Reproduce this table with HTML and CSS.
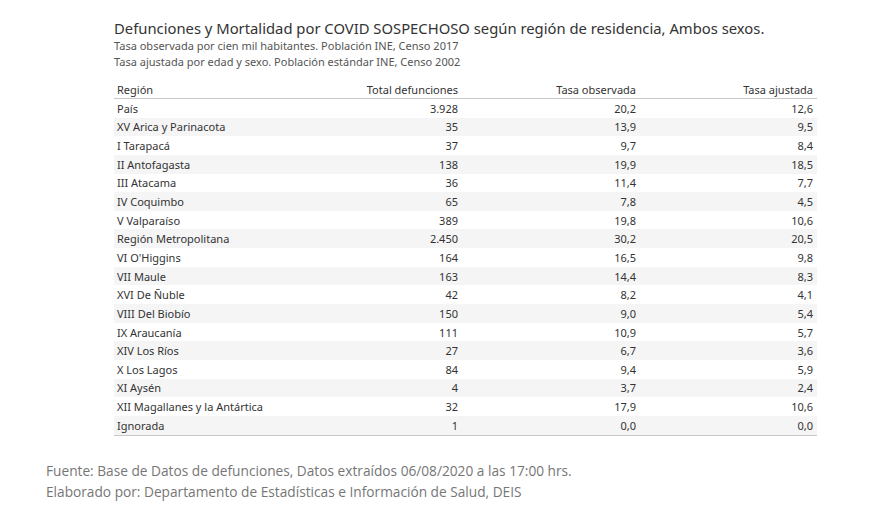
FILE: index.html
```html
<!DOCTYPE html>
<html lang="es">
<head>
<meta charset="utf-8">
<link rel="stylesheet" href="styles.css">
</head>
<body>
<div class="page">
  <div class="head">
    <h1 class="title">Defunciones y Mortalidad por COVID SOSPECHOSO según región de residencia, Ambos sexos.</h1>
    <p class="sub">Tasa observada por cien mil habitantes. Población INE, Censo 2017</p>
    <p class="sub">Tasa ajustada por edad y sexo. Población estándar INE, Censo 2002</p>
  </div>
  <div class="table">
    <div class="row hdr"><span>Región</span><span class="num">Total defunciones</span><span class="num">Tasa observada</span><span class="num">Tasa ajustada</span></div>
    <div class="row"><span>País</span><span class="num">3.928</span><span class="num">20,2</span><span class="num">12,6</span></div>
    <div class="row"><span>XV Arica y Parinacota</span><span class="num">35</span><span class="num">13,9</span><span class="num">9,5</span></div>
    <div class="row"><span>I Tarapacá</span><span class="num">37</span><span class="num">9,7</span><span class="num">8,4</span></div>
    <div class="row"><span>II Antofagasta</span><span class="num">138</span><span class="num">19,9</span><span class="num">18,5</span></div>
    <div class="row"><span>III Atacama</span><span class="num">36</span><span class="num">11,4</span><span class="num">7,7</span></div>
    <div class="row"><span>IV Coquimbo</span><span class="num">65</span><span class="num">7,8</span><span class="num">4,5</span></div>
    <div class="row"><span>V Valparaíso</span><span class="num">389</span><span class="num">19,8</span><span class="num">10,6</span></div>
    <div class="row"><span>Región Metropolitana</span><span class="num">2.450</span><span class="num">30,2</span><span class="num">20,5</span></div>
    <div class="row"><span>VI O'Higgins</span><span class="num">164</span><span class="num">16,5</span><span class="num">9,8</span></div>
    <div class="row"><span>VII Maule</span><span class="num">163</span><span class="num">14,4</span><span class="num">8,3</span></div>
    <div class="row"><span>XVI De Ñuble</span><span class="num">42</span><span class="num">8,2</span><span class="num">4,1</span></div>
    <div class="row"><span>VIII Del Biobío</span><span class="num">150</span><span class="num">9,0</span><span class="num">5,4</span></div>
    <div class="row"><span>IX Araucanía</span><span class="num">111</span><span class="num">10,9</span><span class="num">5,7</span></div>
    <div class="row"><span>XIV Los Ríos</span><span class="num">27</span><span class="num">6,7</span><span class="num">3,6</span></div>
    <div class="row"><span>X Los Lagos</span><span class="num">84</span><span class="num">9,4</span><span class="num">5,9</span></div>
    <div class="row"><span>XI Aysén</span><span class="num">4</span><span class="num">3,7</span><span class="num">2,4</span></div>
    <div class="row"><span>XII Magallanes y la Antártica</span><span class="num">32</span><span class="num">17,9</span><span class="num">10,6</span></div>
    <div class="row last"><span>Ignorada</span><span class="num">1</span><span class="num">0,0</span><span class="num">0,0</span></div>
  </div>
  <div class="foot">
    <p>Fuente: Base de Datos de defunciones, Datos extraídos 06/08/2020 a las 17:00 hrs.</p>
    <p>Elaborado por: Departamento de Estadísticas e Información de Salud, DEIS</p>
  </div>
</div>
</body>
</html>
```

FILE: styles.css
```css
html, body {
  margin: 0;
  padding: 0;
  background: #ffffff;
}
.page {
  width: 878px;
  height: 506px;
  overflow: hidden;
  font-family: "Noto Sans", "Open Sans", sans-serif;
  color: #333333;
}
.head {
  padding: 18px 0 0 114px;
}
.title {
  margin: 0;
  font-size: 14.8px;
  font-weight: 400;
  line-height: 20px;
  color: #333333;
}
.sub {
  margin: 0;
  font-size: 11px;
  line-height: 16px;
  color: #555555;
}
.table {
  margin: 9px 0 0 114px;
  width: 703px;
  font-size: 11px;
}
.row {
  display: grid;
  grid-template-columns: 200px 148px 178px 177px;
  height: 18.65px;
  align-items: center;
}
.row span {
  padding: 0 4px 0 3px;
  white-space: nowrap;
}
.row .num {
  text-align: right;
}
.row:nth-child(odd) {
  background: #f5f5f5;
}
.row.hdr {
  height: 20px;
  padding-top: 2px;
  padding-bottom: 1px;
  box-sizing: border-box;
  background: #ffffff;
  border-bottom: 1px solid #c8c8c8;
}
.row.last {
  border-bottom: 1px solid #c8c8c8;
}
.foot {
  padding: 24px 0 0 46px;
  font-family: "Open Sans", "Noto Sans", sans-serif;
  font-size: 13.7px;
  color: #767676;
}
.foot p {
  margin: 0;
  line-height: 21px;
}
```
